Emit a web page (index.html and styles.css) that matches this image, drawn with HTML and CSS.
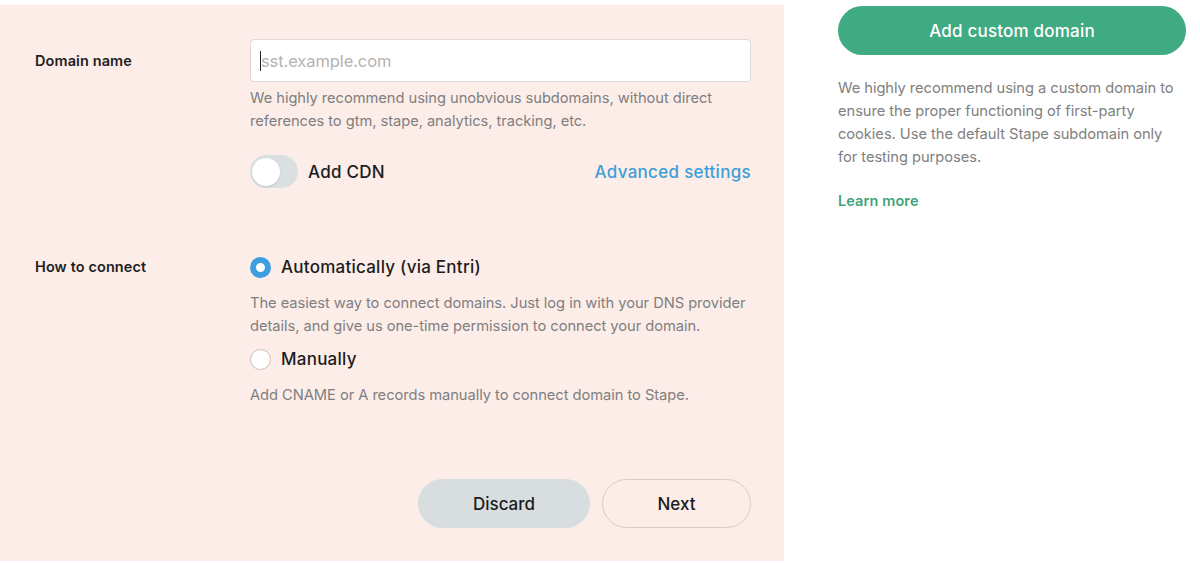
FILE: index.html
```html
<!DOCTYPE html>
<html lang="en">
<head>
<meta charset="utf-8">
<title>Add custom domain</title>
<link rel="stylesheet" href="styles.css">
</head>
<body>
<div class="page">
  <section class="panel">
    <div class="row">
      <div class="label label-domain">Domain name</div>
      <div class="field">
        <div class="input"><span class="caret"></span><span class="placeholder">sst.example.com</span></div>
        <p class="help help-domain">We highly recommend using unobvious subdomains, without direct references to gtm, stape, analytics, tracking, etc.</p>
        <div class="cdn-row">
          <div class="toggle-wrap">
            <span class="toggle"><span class="knob"></span></span>
            <span class="opt-label">Add CDN</span>
          </div>
          <a class="adv">Advanced settings</a>
        </div>
      </div>
    </div>
    <div class="row row-connect">
      <div class="label label-connect">How to connect</div>
      <div class="field">
        <div class="radio-row">
          <span class="radio checked"></span>
          <span class="opt-label">Automatically (via Entri)</span>
        </div>
        <p class="help help-auto">The easiest way to connect domains. Just log in with your DNS provider details, and give us one-time permission to connect your domain.</p>
        <div class="radio-row radio-manual">
          <span class="radio"></span>
          <span class="opt-label">Manually</span>
        </div>
        <p class="help help-manual">Add CNAME or A records manually to connect domain to Stape.</p>
        <div class="actions">
          <button class="btn btn-discard">Discard</button>
          <button class="btn btn-next">Next</button>
        </div>
      </div>
    </div>
  </section>
  <aside class="side">
    <button class="btn-green">Add custom domain</button>
    <p class="side-text">We highly recommend using a custom domain to ensure the proper functioning of first-party cookies. Use the default Stape subdomain only for testing purposes.</p>
    <a class="learn">Learn more</a>
  </aside>
</div>
</body>
</html>
```

FILE: styles.css
```css
* { box-sizing: border-box; }
html, body { margin: 0; padding: 0; background: #ffffff; }
body {
  font-family: Inter, "Open Sans", "Liberation Sans", sans-serif;
  color: #1c1c1c;
  width: 1200px;
  height: 563px;
  overflow: hidden;
}
.page {
  display: flex;
  align-items: flex-start;
  gap: 54px;
}
.panel {
  width: 784px;
  height: 556px;
  margin-top: 5px;
  background: #fcede9;
  padding: 34px 33px 0 35px;
}
.row {
  display: grid;
  grid-template-columns: 215px 501px;
}
.label {
  font-size: 14.5px;
  font-weight: 600;
  color: #1e1e1e;
  letter-spacing: 0.1px;
}
.label-domain { line-height: 43px; }
.label-connect { line-height: 24px; }
.input {
  height: 43px;
  background: #ffffff;
  border: 1px solid #dcd8d6;
  border-radius: 4px;
  display: flex;
  align-items: center;
  padding-left: 9px;
}
.caret {
  width: 1px;
  height: 20px;
  background: #222;
}
.placeholder {
  font-size: 16.5px;
  color: #b3b3b3;
  letter-spacing: -0.1px;
}
.help {
  margin: 0;
  font-size: 14.7px;
  line-height: 23px;
  color: #7f7f7f;
  letter-spacing: -0.05px;
}
.help-domain { margin-top: 5px; }
.cdn-row {
  margin-top: 22px;
  display: flex;
  align-items: center;
  justify-content: space-between;
  height: 33px;
}
.toggle-wrap {
  display: flex;
  align-items: center;
  gap: 10px;
}
.toggle {
  width: 48px;
  height: 33px;
  border-radius: 17px;
  background: #dadfe1;
  display: flex;
  align-items: center;
  padding-left: 2px;
}
.knob {
  width: 28px;
  height: 28px;
  border-radius: 50%;
  background: #ffffff;
  box-shadow: 0 1px 2px rgba(0,0,0,0.12);
}
.opt-label {
  font-size: 17px;
  font-weight: 500;
  color: #1c1c1c;
  letter-spacing: 0.25px;
}
.adv {
  font-size: 17px;
  font-weight: 500;
  color: #3d9fd8;
  letter-spacing: 0.3px;
}
.row-connect { margin-top: 67px; }
.radio-row {
  display: flex;
  align-items: center;
  gap: 10px;
  height: 24px;
}
.radio {
  width: 21px;
  height: 21px;
  border-radius: 50%;
  border: 1px solid #cbbbb7;
  background: #ffffff;
}
.radio.checked {
  border: 6px solid #3d9fe0;
  background: #ffffff;
}
.help-auto { margin-top: 13px; }
.radio-manual { margin-top: 9px; }
.help-manual { margin-top: 13px; }
.actions {
  margin-top: 72px;
  display: flex;
  justify-content: flex-end;
  gap: 12px;
}
.btn {
  font-family: inherit;
  height: 49px;
  border-radius: 25px;
  font-size: 17px;
  font-weight: 500;
  color: #1c1c1c;
  cursor: pointer;
}
.btn-discard {
  width: 172px;
  background: #d8dde0;
  border: none;
}
.btn-next {
  width: 149px;
  background: transparent;
  border: 1px solid #dcc9c4;
}
.side {
  width: 348px;
  padding-top: 6px;
}
.btn-green {
  width: 348px;
  height: 49px;
  border: none;
  border-radius: 25px;
  background: #40aa83;
  color: #ffffff;
  font-family: inherit;
  font-size: 17px;
  font-weight: 500;
  letter-spacing: 0.2px;
}
.side-text {
  margin: 22px 0 0;
  max-width: 338px;
  font-size: 14.7px;
  line-height: 23px;
  color: #808080;
  letter-spacing: -0.05px;
}
.learn {
  display: block;
  margin-top: 23px;
  font-size: 14.5px;
  font-weight: 600;
  color: #3fa27b;
  letter-spacing: 0.1px;
}
```
